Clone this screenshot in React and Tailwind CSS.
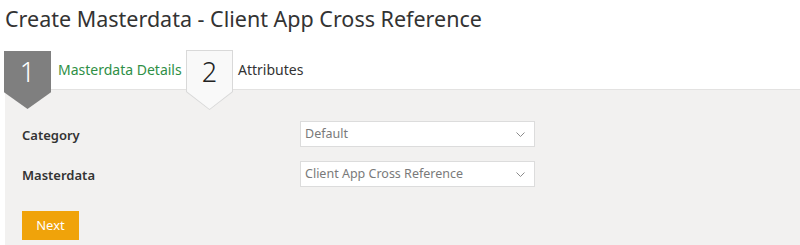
import React from 'react';

const font = { fontFamily: '"Noto Sans", "Open Sans", sans-serif' };

function Chevron() {
  return (
    <svg width="9" height="5" viewBox="0 0 9 5" className="text-[#8a8a8a]">
      <path d="M0.5 0.5 L4.5 4.5 L8.5 0.5" fill="none" stroke="currentColor" strokeWidth="1" />
    </svg>
  );
}

function SelectBox({ value }) {
  return (
    <div className="flex items-center justify-between w-[235px] h-[26px] bg-white border border-[#dcdcdc] pl-[4px] pr-[9px] text-[12.5px] text-[#7a7a7a]">
      <span>{value}</span>
      <Chevron />
    </div>
  );
}

export default function App() {
  return (
    <div className="w-[800px] h-[245px] bg-white overflow-hidden flex flex-col" style={font}>
      <h1 className="h-[50px] pl-[5px] pt-[4px] text-[21.5px] leading-[30px] text-[#333333]">
        Create Masterdata - Client App Cross Reference
      </h1>

      {/* wizard steps */}
      <div className="relative z-10 flex items-start h-[39px] pl-[4px]">
        <div className="mt-[1px] w-[47px] h-[58px] bg-[#7f7f7f] [clip-path:polygon(0_0,100%_0,100%_71%,50%_100%,0_71%)] flex justify-center pt-[4px] text-[27px] leading-[34px] font-light text-white">
          1
        </div>
        <div className="w-[135px] pl-[7px] pt-[9px] text-[14px] text-[#2f8f46]">Masterdata Details</div>
        <div className="w-[47px] h-[60px] bg-[#d9d9d9] [clip-path:polygon(0_0,100%_0,100%_70%,50%_100%,0_70%)] p-[1px]">
          <div className="w-full h-full bg-[#f9f9f9] [clip-path:polygon(0_0,100%_0,100%_70%,50%_100%,0_70%)] flex justify-center pt-[4px] text-[27px] leading-[34px] font-light text-[#222222]">
            2
          </div>
        </div>
        <div className="pl-[5px] pt-[9px] text-[14px] text-[#333333]">Attributes</div>
      </div>

      {/* form panel */}
      <div className="flex-1 ml-[5px] bg-[#f2f1f0] border-t border-[#e3e2e1] pl-[17px] pt-[31px]">
        <div className="flex flex-col gap-[14px]">
          <div className="flex items-center">
            <div className="w-[278px] pt-[3px] text-[13px] font-semibold text-[#333333]">Category</div>
            <SelectBox value="Default" />
          </div>
          <div className="flex items-center">
            <div className="w-[278px] pt-[3px] text-[13px] font-semibold text-[#333333]">Masterdata</div>
            <SelectBox value="Client App Cross Reference" />
          </div>
        </div>
        <button className="mt-[24px] w-[57px] h-[29px] bg-[#f0a30a] text-white text-[13px]">Next</button>
      </div>
    </div>
  );
}
